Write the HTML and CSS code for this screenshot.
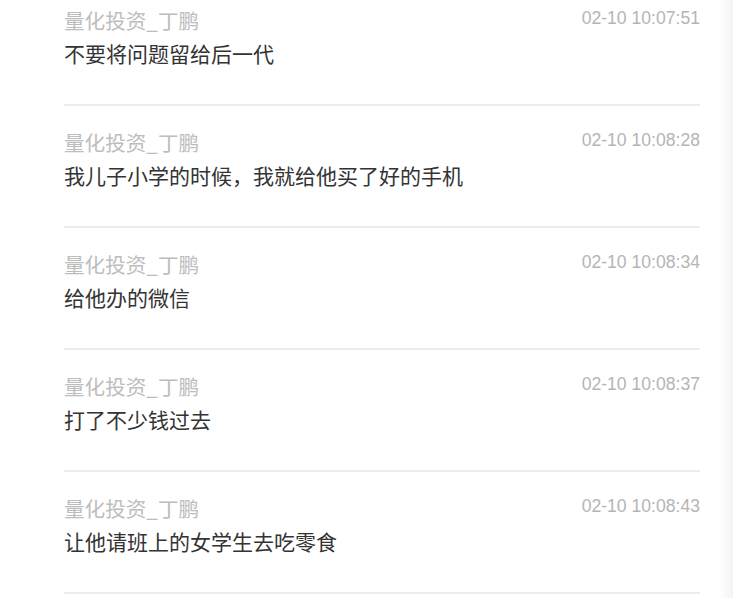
FILE: index.html
```html
<!DOCTYPE html>
<html lang="zh-CN">
<head>
  <meta charset="UTF-8" />
  <meta name="viewport" content="width=device-width, initial-scale=1" />
  <title>评论</title>
  <link rel="stylesheet" href="styles.css">
</head>
<body>
  <div id="page">
    <ul class="comments">
      <li class="comment">
        <div class="comment-head">
          <span class="name">量化投资_丁鹏</span>
          <span class="time">02-10 10:07:51</span>
        </div>
        <p class="text">不要将问题留给后一代</p>
      </li>
      <li class="comment">
        <div class="comment-head">
          <span class="name">量化投资_丁鹏</span>
          <span class="time">02-10 10:08:28</span>
        </div>
        <p class="text">我儿子小学的时候，我就给他买了好的手机</p>
      </li>
      <li class="comment">
        <div class="comment-head">
          <span class="name">量化投资_丁鹏</span>
          <span class="time">02-10 10:08:34</span>
        </div>
        <p class="text">给他办的微信</p>
      </li>
      <li class="comment">
        <div class="comment-head">
          <span class="name">量化投资_丁鹏</span>
          <span class="time">02-10 10:08:37</span>
        </div>
        <p class="text">打了不少钱过去</p>
      </li>
      <li class="comment">
        <div class="comment-head">
          <span class="name">量化投资_丁鹏</span>
          <span class="time">02-10 10:08:43</span>
        </div>
        <p class="text">让他请班上的女学生去吃零食</p>
      </li>
    </ul>
  </div>
</body>
</html>
```

FILE: styles.css
```css
html, body {
  margin: 0;
  padding: 0;
  height: 100%;
  overflow: hidden;
}
body {
  font-family: "Noto Sans CJK SC", "Noto Sans", sans-serif;
  background: #fff;
  color: #333;
}
#page {
  display: flow-root;
  height: 100%;
  background: linear-gradient(to right, #fff 0, #fff 719px, #f3f3f3 733px);
}
/* list is shown scrolled a little */
.comments {
  list-style: none;
  margin: -16px 0 0 0;
  padding: 0 33px 0 64px;
  width: 636px;
}
.comment {
  padding: 22px 0 33px;
  border-bottom: 2px solid #ececec;
}
.comment-head {
  display: flex;
  justify-content: space-between;
  align-items: flex-start;
  height: 28px;
}
.name {
  font-size: 20.6px;
  line-height: 28px;
  color: #bdbdbd;
}
.time {
  font-family: "Liberation Sans", Arial, sans-serif;
  font-size: 17.6px;
  line-height: 24px;
  color: #b5b5b5;
}
.text {
  margin: 1px 0 0;
  font-size: 21px;
  line-height: 36px;
  color: #333;
}
```
